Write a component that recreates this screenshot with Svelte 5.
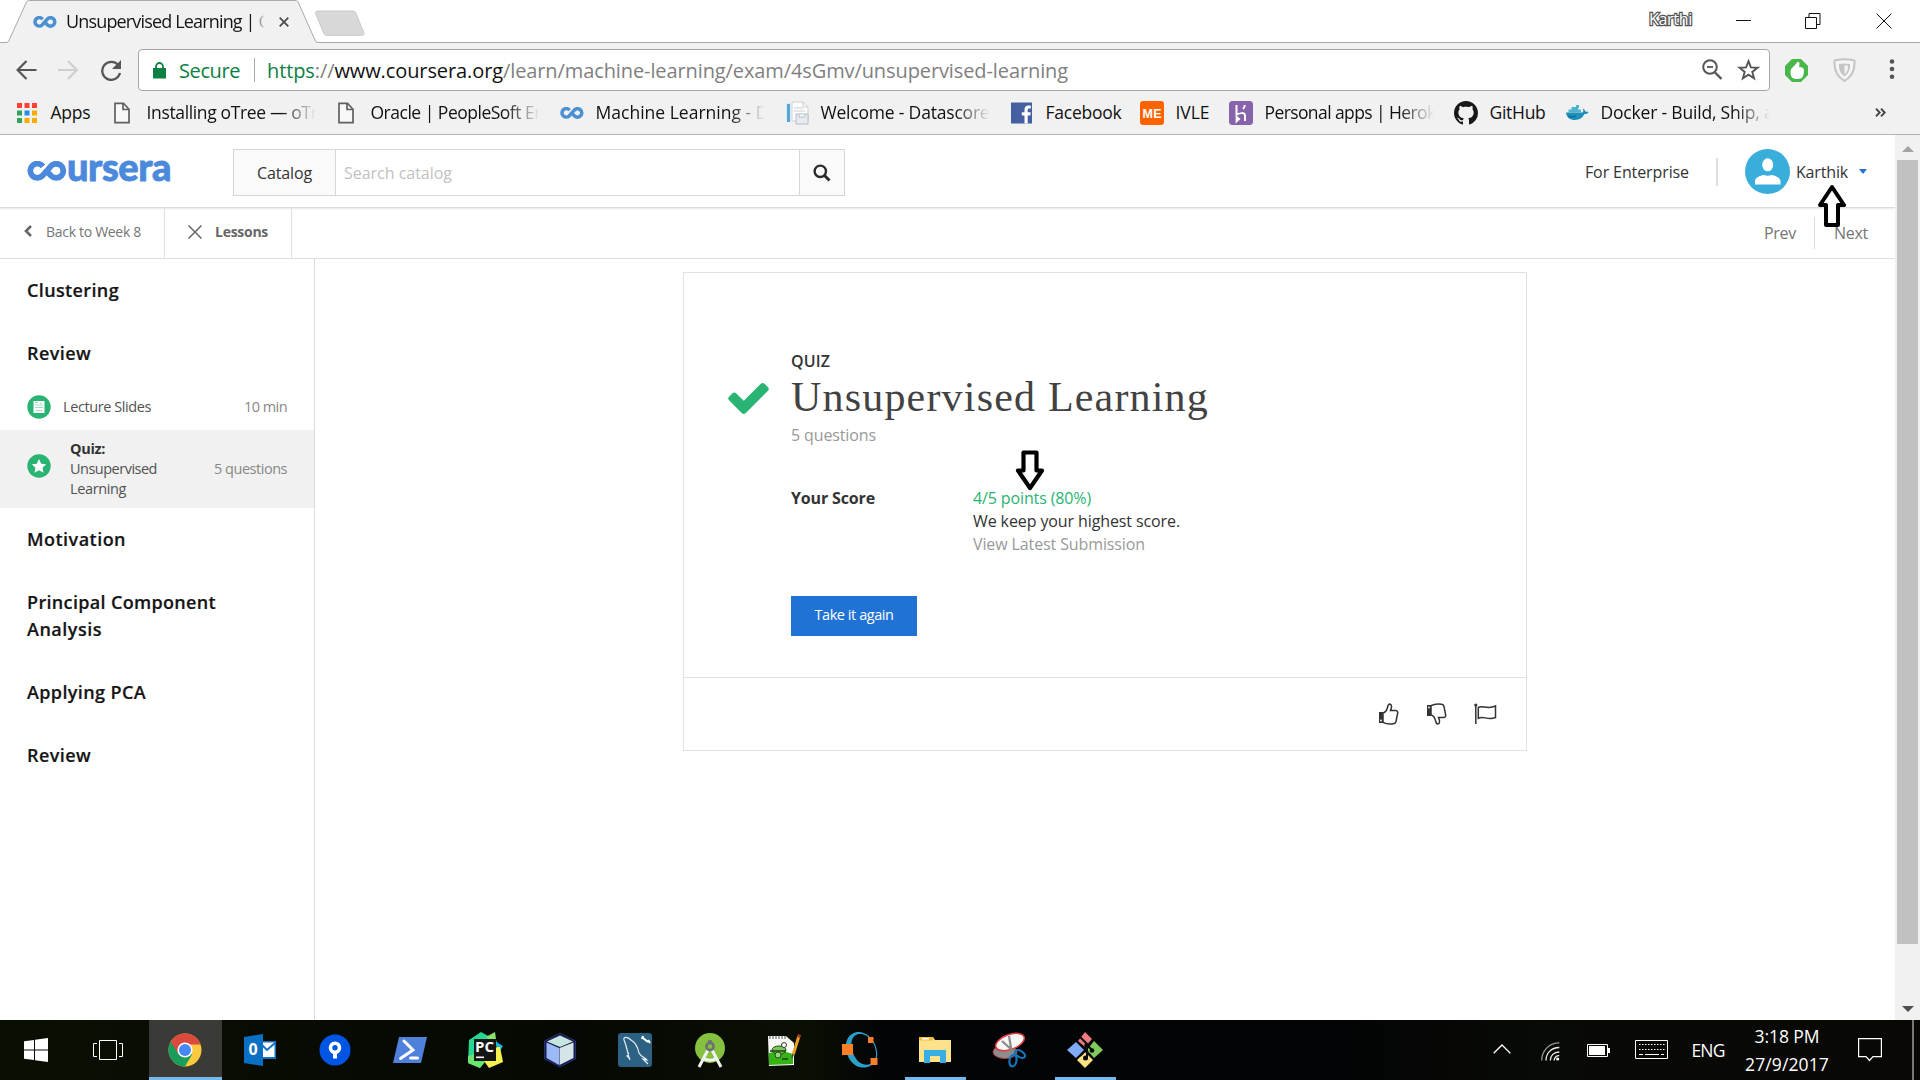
<script>
  // Tracks a label so that it takes exactly the given width.
  function fit(node, width) {
    const natural = node.getBoundingClientRect().width;
    const count = [...node.textContent].length;
    node.style.letterSpacing = `${(width - natural) / count}px`;
  }

  const bookmarks = [
    { icon: 'apps', label: 'Apps', text: 40, slot: 96 },
    { icon: 'file', label: 'Installing oTree — oTr', text: 171, slot: 224, fade: true },
    { icon: 'file', label: 'Oracle | PeopleSoft En', text: 174, slot: 225, fade: true },
    { icon: 'coursera', label: 'Machine Learning - D', text: 173, slot: 225, fade: true },
    { icon: 'welcome', label: 'Welcome - Datascore', text: 169, slot: 225, fade: true },
    { icon: 'facebook', label: 'Facebook', text: 76, slot: 130 },
    { icon: 'ivle', label: 'IVLE', text: 34, slot: 89 },
    { icon: 'heroku', label: 'Personal apps | Herok', text: 171, slot: 225, fade: true },
    { icon: 'github', label: 'GitHub', text: 56, slot: 111 },
    { icon: 'docker', label: 'Docker - Build, Ship, a', text: 173, slot: 225, fade: true }
  ];

  const tasks = [
    { icon: 'chrome', active: true },
    { icon: 'outlook' },
    { icon: 'sourcetree' },
    { icon: 'powershell' },
    { icon: 'pycharm' },
    { icon: 'netbeans' },
    { icon: 'mysql' },
    { icon: 'android' },
    { icon: 'notepad' },
    { icon: 'octave' },
    { icon: 'explorer', open: true },
    { icon: 'snip' },
    { icon: 'git', open: true }
  ];
</script>

{#snippet infinity(cls)}
  <svg class={cls} viewBox="0 0 40 20">
    <path d="M16 5.400A7.100 7.100 0 1 0 15.300 14.900L23.500 5.600A7.100 7.100 0 1 1 24.300 15L21.400 12" fill="none" stroke="currentColor" stroke-width="5.800" stroke-linejoin="round" />
  </svg>
{/snippet}

{#snippet bookmarkIcon(name)}
  {#if name === 'coursera'}
    {@render infinity('bm-infinity')}
  {:else}
    <svg class="bm-icon" viewBox="0 0 24 24">
      {#if name === 'apps'}
        <path fill="#ff3f34" d="M2 2h5v5H2zM9.500 2h5v5h-5zM17 2h5v5h-5z" />
        <path fill="#31a35c" d="M2 9.500h5v5H2zM2 17h5v5H2z" />
        <path fill="#2490ee" d="M9.500 9.500h5v5h-5z" />
        <path fill="#f9ab00" d="M17 9.500h5v5h-5zM9.500 17h5v5h-5zM17 17h5v5h-5z" />
      {:else if name === 'file'}
        <path d="M4 2.300h8.500l5.500 6V21.700H4z M12 2.500v6h6" fill="#f8f8f8" stroke="#5f6062" stroke-width="1.700" />
      {:else if name === 'welcome'}
        <path d="M1 2h5v19H1z" fill="#d8ebf6" />
        <path d="M2 3h3v18H2z" fill="#55a5d8" />
        <path d="M7 1h11l5 5v14H7z" fill="#fbfbfc" stroke="#ccd1d8" />
        <path d="M18 1v5h5M9 7h9M9 10h11" fill="none" stroke="#cbd1da" />
        <path d="M11 13h12v10H11zM14 13v3h6v-3" fill="#e7ebf0" stroke="#b6bec8" />
      {:else if name === 'facebook'}
        <rect x="1" y="1.500" width="21" height="21" fill="#4460a0" />
        <path d="M14.500 22.500v-8h-2.700v-3.200h2.700V8.600c0-2.700 1.500-4.200 4.100-4.200h2.200v3h-1.500c-1.200 0-1.600.6-1.600 1.600v2.300h3l-.4 3.200h-2.600v8z" fill="#fff" />
      {:else if name === 'ivle'}
        <rect width="24" height="24" rx="3" fill="#ff6300" />
        <text x="12" y="16.500" text-anchor="middle" font-family="Liberation Sans" font-weight="700" font-size="12.500" fill="#fff" textLength="19">ME</text>
      {:else if name === 'heroku'}
        <rect width="24" height="24" rx="3.500" fill="#8663aa" />
        <path d="M7.500 4v9.500c3-1.200 8.500-2.800 8.500 1V20M15.800 4c0 1.600-.8 3-1.800 4M7.600 16v4.200l2.400-2.100z" fill="none" stroke="#fff" stroke-width="2" />
      {:else if name === 'github'}
        <path transform="scale(1.500)" fill="#191717" d="M8 0C3.580 0 0 3.580 0 8c0 3.540 2.290 6.530 5.470 7.590.4.07.55-.17.55-.38 0-.19-.01-.82-.01-1.490-2.010.37-2.530-.49-2.690-.94-.09-.23-.48-.94-.82-1.130-.28-.15-.68-.52-.01-.53.63-.01 1.080.58 1.230.82.72 1.210 1.870.87 2.330.66.07-.52.28-.87.51-1.070-1.780-.2-3.640-.89-3.640-3.950 0-.87.31-1.590.82-2.150-.08-.2-.36-1.020.08-2.120 0 0 .67-.21 2.200.82.64-.18 1.320-.27 2-.27s1.360.09 2 .27c1.530-1.040 2.200-.82 2.200-.82.44 1.100.16 1.920.08 2.120.51.56.82 1.270.82 2.150 0 3.070-1.870 3.750-3.650 3.950.29.25.54.73.54 1.480 0 1.070-.01 1.930-.01 2.200 0 .21.15.46.55.38A8.010 8.010 0 0 0 16 8c0-4.420-3.580-8-8-8z" />
      {:else if name === 'docker'}
        <path d="M1 11.500h16.500c1-.6 1-2.500.3-4 1.600.6 2.200 1.700 2.300 3 1.200-.3 2.400 0 3.400.4-.7 1.700-2.200 2.300-4 2.200C17.700 17 14.500 19 10 19c-5 0-8.500-2.500-9-7.500z" fill="#1d8fb8" />
        <path d="M3.500 8.500h12.500v3H3.500zM6.500 6h6.500v3H6.500zM11 4h3v3h-3z" fill="#4fb3d0" />
        <path d="M3.500 15c3 1.500 6 1 7.500 0" stroke="#0e5d80" fill="none" />
      {/if}
    </svg>
  {/if}
{/snippet}

{#snippet taskIcon(name)}
  <svg class="task-icon" viewBox="0 0 36 36">
    {#if name === 'chrome'}
      <circle cx="18" cy="18" r="16.500" fill="#fbc93d" />
      <path d="M18 18 3.700 9.750A16.500 16.500 0 0 0 18 34.500l7.200-12.300z" fill="#1a9d5b" />
      <path d="M3.700 9.750A16.500 16.500 0 0 1 33.500 12.500H18l-6.800 9z" fill="#dc4a3d" />
      <circle cx="18" cy="18" r="7.600" fill="#fff" />
      <circle cx="18" cy="18" r="6" fill="#4587f3" />
    {:else if name === 'outlook'}
      <path d="M19 9h15v18H19z" fill="#0f72c6" />
      <path d="M20 10.500h12.500V25H20z" fill="#fff" />
      <path d="m19 12 6 6 8-7" fill="none" stroke="#0f72c6" stroke-width="2" />
      <path d="m2 5 19-3v32L2 31z" fill="#0a70c4" />
      <text x="11.200" y="23.200" text-anchor="middle" font-family="Open Sans" font-weight="700" font-size="16" fill="#fff">0</text>
    {:else if name === 'sourcetree'}
      <circle cx="18" cy="18" r="15.500" fill="#0055e4" />
      <circle cx="18" cy="15.800" r="4.500" fill="none" stroke="#fff" stroke-width="3.600" />
      <path d="M16 20h4v6.500h-4z" fill="#fff" />
    {:else if name === 'powershell'}
      <path d="M7 5h28l-6 26H1z" fill="#4f80db" />
      <path d="m12 9 9 9L8.500 26.500M18.500 26h7" fill="none" stroke="#fff" stroke-width="3" stroke-linecap="round" />
    {:else if name === 'pycharm'}
      <path d="m2 8 12-8 9 5-5 24-5 7-12-5z" fill="#25d790" />
      <path d="m19 5 9-5 2 14z" fill="#87e36b" />
      <path d="m28 9 8 5-5 8z" fill="#17b6e0" />
      <path d="M30 15h3l3 15-14 6-5-7z" fill="#f4f34e" />
      <path d="m1 24 6-2 3 7 8 1-5 6-12-5z" fill="#6be36d" />
      <path d="M7 7h22v22H7z" fill="#151515" />
      <text x="8" y="19.800" font-family="Open Sans" font-weight="700" font-size="14" fill="#fff" textLength="19" lengthAdjust="spacingAndGlyphs">PC</text>
      <path d="M9 24.500h8v1.600H9z" fill="#fff" />
    {:else if name === 'netbeans'}
      <path d="m18 1 15.500 8v18L18 35 2.500 27V9z" fill="#171c4d" stroke="#29306e" />
      <path d="m18 3.500 13 6L18 15 5 9.500z" fill="#c6e6df" />
      <path d="M4.500 10.500 17 16v17L4.500 26z" fill="#9bb9f4" />
      <path d="M31.500 10.500 17.500 16v17l14-7z" fill="#d5e4e7" />
    {:else if name === 'mysql'}
      <rect x="1" y="1" width="34" height="34" rx="3" fill="#2c6184" />
      <path d="M13 28c-3-7-2-11-6-20-1-4 4-3 7 0 5 3 7 8 8 13 2 4 6 4 8 7l-4-1 5 5M12 21l-2 3 3 3" fill="none" stroke="#e8f0f4" stroke-width="1.200" />
      <path d="m26 6 5 4M26 4l-1 3M31 8l2 3" stroke="#fff" stroke-width="2.200" />
    {:else if name === 'android'}
      <circle cx="18" cy="16" r="15" fill="#86c13f" />
      <path d="m17 16-10 19M19 16l10 19M11 26c4 3 10 3 14 0" fill="none" stroke="#f4f4f4" stroke-width="3" />
      <path d="M16 8h4v5h-4z" fill="#777" />
      <circle cx="18" cy="14.500" r="3.600" fill="#84c044" stroke="#6e7171" stroke-width="2.600" />
    {:else if name === 'notepad'}
      <path d="M1 4h18l8 7v22L2 34z" fill="#fbfcf6" />
      <path d="M2 21q12-4 24 1v10L2 33z" fill="#35b515" />
      <path d="M3 4v3M6 4v3M9 4v3M12 4v3M15 4v3M18 4v3" stroke="#555" />
      <ellipse cx="12" cy="18" rx="7" ry="4" fill="#7bc757" stroke="#1e4d15" />
      <circle cx="11" cy="23" r="3" fill="#9ad775" stroke="#244a1a" />
      <circle cx="17" cy="13" r="2.500" fill="#fff" stroke="#333" />
      <path d="M3 19h16M15 27h6" stroke="#243b19" stroke-width="1.400" />
      <path d="M32 4 26 23" stroke="#e9a326" stroke-width="3" />
      <path d="m32.500 2.500-.8 3" stroke="#b4302a" stroke-width="3" />
      <path d="m26 22-1 4" stroke="#444" stroke-width="1.500" />
    {:else if name === 'octave'}
      <path fill-rule="evenodd" d="M15 0C27-1 37 13 35 25c-2 9-13 14-22 8C2 26-1 3 15 0zm2 2C5 4 9 23 17 30c7 5 15 3 17-6C35 13 27 1 17 2z" fill="#2aa0cd" />
      <path d="M0 12h11v11H0zM26 5h5.500v6H26zM28.500 26h7v7h-7z" fill="#fb7f26" />
    {:else if name === 'explorer'}
      <path d="M2 5h14l2 3h16v22H2z" fill="#fde28c" />
      <path d="M2 5h14v3.500H2z" fill="#f6bd31" />
      <path d="M5 6h7v1.500H5z" fill="#fff" />
      <path d="M7 18h22v13h-6v-7H13v7H7z" fill="#39ade5" />
    {:else if name === 'snip'}
      <ellipse cx="13" cy="20" rx="12" ry="6.500" fill="#8d8d8d" stroke="#b33c3c" />
      <ellipse cx="18" cy="10" rx="15" ry="7.500" transform="rotate(-20 18 10)" fill="#f6f6f6" stroke="#e23a3d" stroke-width="1.500" />
      <path d="M10 9 21 19M17 4l3 18" stroke="#8a8a8a" stroke-width="2.200" />
      <ellipse cx="28" cy="22" rx="3" ry="5.500" transform="rotate(-60 28 22)" fill="none" stroke="#1674b8" stroke-width="2.200" />
      <ellipse cx="21" cy="28.500" rx="3.500" ry="6" transform="rotate(10 21 28.500)" fill="none" stroke="#1674b8" stroke-width="2.200" />
    {:else if name === 'git'}
      <path d="m18 0 7 7-7 8-7-6z" fill="#f07b80" />
      <path d="m27 9 9 9-9 8-7-8z" fill="#81cb5c" />
      <path d="m9 10 8 8-8 8-9-8z" fill="#80abf8" />
      <path d="m18 20 8 8-8 8-8-8z" fill="#fbe182" />
      <path d="m13 5 7 7v15M20 13l6 6M18 19l-5 5" fill="none" stroke="#090b0d" stroke-width="2" />
      <circle cx="18.500" cy="26" r="2.500" fill="#090b0d" /><circle cx="25" cy="18.500" r="2.300" fill="#090b0d" /><circle cx="19.500" cy="13.500" r="2.300" fill="#090b0d" />
    {/if}
  </svg>
{/snippet}

{#snippet thumb()}
  <path d="M1 9h4v11H1z" fill="#333" />
  <circle cx="3" cy="17.500" r=".9" fill="#fff" />
  <path d="M5 10c2.500-.6 4-3.200 4.600-6 .4-2 .8-3 2.300-3 2.200.3 1.900 3.500.6 6.500h5.300c2 .1 2.200 2 1.600 3.800L18 18.500c-.4 1.300-1 2-2.400 2.200-3.600.5-7.600.3-10.600-1.400z" fill="none" stroke="#333" stroke-width="1.500" />
{/snippet}

<div class="screen">
  <header class="titlebar">
    <div class="tab">
      <svg class="tab-shape" viewBox="0 0 320 43">
        <path d="M0 42.500H6c2 0 2.500-1 3.200-2.500L26 3c.8-1.800 1.500-2.500 3.500-2.500H295c2 0 2.800.7 3.500 2.500L315 40c.7 1.500 1.300 2.500 3 2.500h2V43H0z" fill="#f1f1f1" />
        <path d="M0 42.500H6c2 0 2.500-1 3.200-2.500L26 3c.8-1.800 1.500-2.500 3.500-2.500H295c2 0 2.800.7 3.500 2.500L315 40c.7 1.500 1.300 2.500 3 2.500h2" fill="none" stroke="#a9a9a9" />
      </svg>
      {@render infinity('tab-favicon')}
      <div class="tab-title"><span use:fit={203}>Unsupervised Learning | C</span></div>
      <svg class="tab-close" viewBox="0 0 10 10"><path d="m.7.7 8.600 8.600M9.300.7.7 9.300" stroke="#4d4d4d" stroke-width="1.800" /></svg>
    </div>
    <svg class="new-tab" viewBox="0 0 52 27"><path d="M3.500 1H39c1.500 0 2.200.6 2.800 2l8 19.500c.6 1.600.2 2.800-1.500 2.800H13c-1.700 0-2.600-.6-3.200-2L1.600 3.500C1 2 1.800 1 3.500 1z" fill="#d8d8d8" stroke="#c9c9c9" /></svg>
    <div class="profile"><span use:fit={43}>Karthi</span></div>
    <svg class="window-buttons" viewBox="0 0 156 16">
      <path d="M0 7.500h15M69.500 4.500h11v11h-11zM73 4V.5h11v11h-3.500M140.500.5l15 15M155.500.5l-15 15" fill="none" stroke="#111" />
    </svg>
  </header>

  <div class="toolbar">
    <svg class="nav-buttons" viewBox="0 0 106 22">
      <path d="M20.500 11H2M10.500 2 1.600 11l8.900 9" fill="none" stroke="#555" stroke-width="2.200" />
      <path d="M42 11h18.500M52 2l8.900 9-8.900 9" fill="none" stroke="#cfcfcf" stroke-width="2.200" />
      <path d="M102.500 6.500A9 9 0 1 0 104 14" fill="none" stroke="#555" stroke-width="2.300" />
      <path d="M105 1v9h-9z" fill="#555" />
    </svg>
    <div class="omnibox">
      <svg class="lock" viewBox="0 0 13 17"><path d="M0 6h13v10.500H0z" fill="#0b8043" /><path d="M3 7V4.500a3.500 3.500 0 0 1 7 0V7" fill="none" stroke="#0b8043" stroke-width="1.800" /></svg>
      <span class="secure" use:fit={61}>Secure</span>
      <i class="omni-sep"></i>
      <span class="url" use:fit={801}><b class="scheme">https</b>://<b class="host">www.coursera.org</b>/learn/machine-learning/exam/4sGmv/unsupervised-learning</span>
      <svg class="omni-icons" viewBox="0 0 58 22">
        <circle cx="8" cy="8" r="6.800" fill="none" stroke="#555" stroke-width="2" />
        <path d="M5 8h6" stroke="#555" stroke-width="1.800" /><path d="m13 13.500 6.500 6.500" stroke="#555" stroke-width="2.400" />
        <path d="m46.500 2.200 2.400 6.200 6.600.3-5.200 4.200 1.800 6.500-5.600-3.700-5.600 3.700 1.800-6.500-5.200-4.200 6.600-.3z" fill="none" stroke="#555" stroke-width="1.900" />
      </svg>
    </div>
    <svg class="extensions" viewBox="0 0 112 24">
      <path d="M7 1h9l7 7v9l-7 7H7l-7-7V8z" fill="#49b649" />
      <path d="M5.500 13c0-2 2.500-4 4-5.500 1.500-1.200 2.200-3.500 3.500-3.800 1.800 0 1.800 3 1 5.300 3 0 5 .8 4.800 3 .2 4-.6 7.500-3 8.500-2.500.6-5.500.6-7.800-.2-2-1-2.500-4-2.500-7.300z" fill="#fff" />
      <path d="M49.500 2.500q10-2.500 20 0c.7 9-2.500 16-10 20.500-7.500-4.500-10.700-11.500-10-20.500z" fill="#f4f4f4" stroke="#c4c4c4" stroke-width="2" />
      <path d="M54 6q5.500-1 11 0c.3 6-1.700 9.500-5.500 12.500C55.700 15.500 53.700 12 54 6z" fill="#c4c4c4" /><path d="M59.500 7.500H63c.3 4-1 7-3.500 9z" fill="#f4f4f4" />
      <circle cx="107" cy="3.500" r="2.300" fill="#555" /><circle cx="107" cy="11" r="2.300" fill="#555" /><circle cx="107" cy="18.800" r="2.300" fill="#555" />
    </svg>
  </div>

  <nav class="bookmarks">
    {#each bookmarks as item}
      <div class="bookmark" style:width="{item.slot}px">
        {@render bookmarkIcon(item.icon)}
        <div class="bm-label" class:fade={item.fade}><span use:fit={item.text}>{item.label}</span></div>
      </div>
    {/each}
    <svg class="more" viewBox="0 0 11 9"><path d="m1 .7 3.700 3.800L1 8.300M6 .7l3.700 3.800L6 8.300" fill="none" stroke="#444" stroke-width="1.900" /></svg>
  </nav>

  <div class="viewport">
    <div class="page">
      <header class="site-header">
        <div class="logo">{@render infinity('logo-infinity')}<span class="logo-text"><span use:fit={104}>ursera</span></span></div>
        <div class="search">
          <div class="catalog"><span use:fit={55}>Catalog</span></div>
          <div class="query"><span use:fit={108}>Search catalog</span></div>
          <div class="go"><svg class="search-icon" viewBox="0 0 18 18"><circle cx="7.300" cy="7.300" r="5.700" fill="none" stroke="#2b2b2b" stroke-width="2.400" /><path d="m11.500 11.500 5 5" stroke="#2b2b2b" stroke-width="3" /></svg></div>
        </div>
        <span class="enterprise"><span use:fit={104}>For Enterprise</span></span>
        <i class="head-sep"></i>
        <svg class="avatar" viewBox="0 0 45 45"><circle cx="22.500" cy="22.500" r="22.500" fill="#3aaedb" /><ellipse cx="22.700" cy="15.800" rx="5.500" ry="6.500" fill="#fff" /><path d="M10 35.500v-3c0-4 5-6 9-6.500 2 1 5.400 1 7.500 0 4 .5 9 2.500 9 6.500v3z" fill="#fff" /></svg>
        <span class="username"><span use:fit={52}>Karthik</span></span>
        <i class="caret"></i>
      </header>

      <nav class="subnav">
        <div class="back">
          <svg class="chev" viewBox="0 0 8 12"><path d="M7 1 2 6l5 5" fill="none" stroke="#666" stroke-width="2.600" /></svg>
          <span use:fit={95}>Back to Week 8</span>
        </div>
        <div class="lessons">
          <svg class="cross" viewBox="0 0 14 14"><path d="m.5.5 13 13m0-13-13 13" stroke="#666" stroke-width="1.500" /></svg>
          <b use:fit={53}>Lessons</b>
        </div>
        <div class="pager"><span class="prev"><span use:fit={32}>Prev</span></span><span class="next"><span use:fit={34}>Next</span></span></div>
      </nav>

      <div class="body">
        <aside class="sidebar">
          <h3><span use:fit={92}>Clustering</span></h3>
          <h3><span use:fit={64}>Review</span></h3>
          <div class="item slides">
            <svg class="badge" viewBox="0 0 24 24"><circle cx="12" cy="12" r="11.700" fill="#29b473" /><path d="M6.500 6h11v12h-11z" fill="#fff" /><path d="M8 10h8M8 12.500h8M9 15.500h6M8 7.500h3M14 7v2" stroke="#9fdcbf" /></svg>
            <span class="name"><span use:fit={88}>Lecture Slides</span></span>
            <span class="meta"><span use:fit={43}>10 min</span></span>
          </div>
          <div class="item current">
            <svg class="badge" viewBox="0 0 24 24"><circle cx="12" cy="12" r="11.700" fill="#29b473" /><path d="m12 5 2.200 4.700 5 .6-3.700 3.500 1 5-4.500-2.500-4.500 2.500 1-5-3.700-3.500 5-.6z" fill="#fff" /></svg>
            <span class="name quiz"><b use:fit={35}>Quiz:</b><span use:fit={87}>Unsupervised</span><span use:fit={56}>Learning</span></span>
            <span class="meta"><span use:fit={73}>5 questions</span></span>
          </div>
          <h3><span use:fit={99}>Motivation</span></h3>
          <h3><span use:fit={189}>Principal Component</span><br /><span use:fit={75}>Analysis</span></h3>
          <h3><span use:fit={119}>Applying PCA</span></h3>
          <h3><span use:fit={64}>Review</span></h3>
        </aside>

        <main class="content">
          <section class="card">
            <div class="card-main">
              <svg class="check" viewBox="121 334 1550 1188"><path fill="#29b473" d="M1671 566q0 40-28 68l-724 724-136 136q-28 28-68 28t-68-28l-136-136-362-362q-28-28-28-68t28-68l136-136q28-28 68-28t68 28l294 295 656-657q28-28 68-28t68 28l136 136q28 28 28 68z" /></svg>
              <div class="details">
                <div class="kicker"><span use:fit={39}>QUIZ</span></div>
                <h1><span use:fit={418}>Unsupervised Learning</span></h1>
                <div class="count"><span use:fit={85}>5 questions</span></div>
                <div class="score">
                  <div class="score-label"><b use:fit={84}>Your Score</b></div>
                  <div class="score-info">
                    <span class="points" use:fit={118}>4/5 points (80%)</span>
                    <span use:fit={207}>We keep your highest score.</span>
                    <span class="muted" use:fit={172}>View Latest Submission</span>
                  </div>
                </div>
                <button><span use:fit={79}>Take it again</span></button>
              </div>
            </div>
            <footer class="card-foot">
              <svg class="react" viewBox="0 0 21 22">{@render thumb()}</svg>
              <svg class="react down" viewBox="0 0 21 22">{@render thumb()}</svg>
              <svg class="flag" viewBox="0 0 23 22"><circle cx="1.800" cy="2" r="1.600" fill="#333" /><path d="M1.800 2v19M4.300 4.500C9 1.500 12.500 7 21.500 3v11.500C13 18 10 12 4.300 15.300z" fill="none" stroke="#333" stroke-width="1.500" /></svg>
            </footer>
          </section>
        </main>
      </div>
    </div>

    <div class="scrollbar">
      <i class="sb-up"></i>
      <i class="sb-thumb"></i>
      <i class="sb-down"></i>
    </div>
  </div>

  <footer class="taskbar">
    <svg class="start" viewBox="0 0 24 24"><path d="m0 3.300 10-1.400v9.600H0zM11 1.800 24 0v11.500H11zM0 12.500h10v9.600L0 20.700zM11 12.500h13V24l-13-1.800z" fill="#fff" /></svg>
    <svg class="task-view" viewBox="0 0 30 20"><path d="M6.500.5h17v19h-17zM4 3.500H.5v13H4M26 3.500h3.500v13H26" fill="none" stroke="#fff" /></svg>
    <div class="tasks">
      {#each tasks as task}
        <div class="task" class:active={task.active} class:open={task.open}>{@render taskIcon(task.icon)}</div>
      {/each}
    </div>
    <div class="tray">
      <svg class="t-chev" viewBox="0 0 18 10"><path d="m.7 9.300 8.300-8.300 8.300 8.300" fill="none" stroke="#fff" stroke-width="1.300" /></svg>
      <svg class="t-wifi" viewBox="0 0 19 19"><path d="M.7 18.500C.7 9 8 .8 18.300.8" fill="none" stroke="#999" stroke-width="1.300" /><path d="M5 18.500C5 11.500 10 5.500 18.300 5.500M9.300 18.500c0-5 3.500-8.500 9-8.500M13.200 18.500c0-3 2-4.800 5.100-4.800" fill="none" stroke="#eee" stroke-width="1.300" /><circle cx="16.700" cy="17" r="1.600" fill="#fff" /></svg>
      <svg class="t-battery" viewBox="0 0 23 13"><path d="M.5.5h20v12H.5z" fill="none" stroke="#fff" /><path d="M2 2h16v9H2zM21 4h2v5h-2z" fill="#fff" /></svg>
      <svg class="t-keyboard" viewBox="0 0 33 19"><path d="M.5.500h32v18H.5z" fill="none" stroke="#fff" /><path d="M4 4.500h26M4 9.500h26" stroke="#fff" stroke-dasharray="1.500 1.500" /><path d="M4 14.500h4M10 14.500h14M26 14.500h3" stroke="#fff" /></svg>
      <span class="lang"><span use:fit={33}>ENG</span></span>
      <div class="clock"><span use:fit={65}>3:18 PM</span><span use:fit={84}>27/9/2017</span></div>
      <svg class="t-note" viewBox="0 0 24 24"><path d="M.6.6h22.800v18H15L11.500 22.500 8 18.600H.6z" fill="none" stroke="#fff" stroke-width="1.200" /></svg>
      <i class="peek"></i>
    </div>
  </footer>

  <svg class="pointer pointer-user" viewBox="0 0 28 45"><path d="M14 3 26 21h-6v20H8V21H2z" fill="#fff" stroke="#000" stroke-width="4" stroke-linejoin="round" /></svg>
  <svg class="pointer pointer-score" viewBox="0 0 30 42"><path d="M15 38 3 20.500h5.500V2.500h13v18H27z" fill="#fff" stroke="#000" stroke-width="4.200" stroke-linejoin="round" /></svg>
</div>

<style>
  :global(body) { margin: 0; overflow: hidden; background: #fff; }
  .screen { position: relative; width: 1920px; height: 1080px; display: flex; flex-direction: column; overflow: hidden; font-family: "Open Sans", "Noto Sans", sans-serif; color: #333; background: #fff; white-space: nowrap; }
  .screen *, .screen { box-sizing: border-box; }
  svg { display: block; flex: none; }
  i { display: block; flex: none; }

  .titlebar { height: 43px; flex: none; display: flex; box-shadow: inset 0 -1px #a9a9a9; }
  .tab { position: relative; width: 314px; height: 43px; display: flex; align-items: center; padding-left: 33px; }
  .tab-shape { position: absolute; left: 0; top: 0; width: 320px; height: 43px; }
  :global(.tab-favicon) { position: relative; width: 24px; height: 12px; color: #4a90d2; }
  .tab-title { position: relative; margin: -1px 0 0 9px; width: 199px; overflow: hidden; font-size: 18px; color: #151515; mask-image: linear-gradient(90deg, #000 187px, transparent 199px); }
  .tab-close { position: relative; width: 10px; height: 10px; margin-left: 14px; }
  .new-tab { width: 52px; height: 27px; margin-top: 10px; }
  .profile { margin: 9px 0 0 auto; padding-right: 44px; font-size: 16px; line-height: 20px; color: #fff; -webkit-text-stroke: 2.500px #555; paint-order: stroke fill; }
  .window-buttons { width: 156px; height: 16px; margin: 13px 28px 0 0; }

  .toolbar { height: 48px; flex: none; display: flex; padding-top: 6px; background: #f1f1f1; }
  .nav-buttons { width: 106px; height: 22px; margin: 10px 16px 0 16px; }
  .omnibox { width: 1632px; height: 42px; background: #fff; border: 1px solid #a5a5a5; border-radius: 4px; display: flex; align-items: center; padding-left: 14px; font-size: 20px; }
  .lock { width: 13px; height: 17px; margin-right: 13px; }
  .secure { color: #0b8043; }
  .omni-sep { width: 1px; height: 24px; margin: 0 12px 0 14px; background: #aaa; }
  .url { color: #808080; }
  .url b { font-weight: 400; }
  .url .scheme { color: #0b8043; }
  .url .host { color: #111; }
  .omni-icons { width: 58px; height: 22px; margin: 0 9px 0 auto; }
  .extensions { width: 112px; height: 24px; margin: 9px 0 0 15px; }

  .bookmarks { height: 44px; flex: none; display: flex; align-items: center; padding-left: 15px; background: #f1f1f1; border-bottom: 1px solid #b0b0b0; font-size: 17.500px; color: #111; }
  .bookmark { flex: none; display: flex; align-items: center; gap: 11px; }
  .bm-icon { width: 24px; height: 24px; }
  :global(.bm-infinity) { width: 24px; height: 12px; color: #4a90d2; }
  .bm-label { overflow: hidden; line-height: 28px; margin-top: -2px; padding-left: .5px; }
  .fade { width: 170px; mask-image: linear-gradient(90deg, #000 135px, transparent 170px); }
  .more { width: 11px; height: 9px; margin-left: 85px; }

  .viewport { height: 885px; flex: none; display: flex; }
  .page { width: 1895px; display: flex; flex-direction: column; }
  .site-header { height: 73px; flex: none; display: flex; align-items: flex-start; padding: 14px 0 0 27px; border-bottom: 1px solid #dcdcdc; box-shadow: 0 1px 2px #e8e8e8; font-size: 16px; line-height: 46px; }
  .logo { display: flex; width: 206px; height: 46px; color: #4a89dc; align-items: flex-start; }
  :global(.logo-infinity) { width: 40px; height: 20px; margin-top: 12px; }
  .logo-text { font: 900 38px/40px Lato, sans-serif; margin-top: -3px; -webkit-text-stroke: .8px #4a89dc; }
  .search { width: 612px; height: 47px; display: flex; border: 1px solid #d6d6d6; }
  .catalog { width: 102px; padding-left: 23px; background: #fafafa; border-right: 1px solid #d6d6d6; }
  .query { flex: 1; padding-left: 8px; color: #c1c1c1; }
  .go { width: 45px; border-left: 1px solid #d6d6d6; background: #fafafa; padding: 14px 13px; }
  .search-icon { width: 18px; height: 18px; }
  .enterprise { margin-left: auto; }
  .head-sep { width: 2px; height: 28px; margin: 9px 27px 0 27px; background: #ddd; }
  .avatar { width: 45px; height: 45px; margin-right: 6px; }
  .caret { margin: 20px 28px 0 11px; border: 4px solid transparent; border-top: 5px solid #2073d5; border-bottom: 0; }

  .subnav { height: 51px; flex: none; display: flex; border-bottom: 1px solid #dfdfdf; color: #757575; font-size: 14px; line-height: 48px; }
  .back { width: 165px; display: flex; border-right: 1px solid #dfdfdf; padding-left: 24px; }
  .chev { width: 8px; height: 12px; margin: 17px 14px 0 0; }
  .lessons { width: 127px; display: flex; border-right: 1px solid #dfdfdf; padding-left: 23px; }
  .lessons b { color: #666; }
  .cross { width: 14px; height: 14px; margin: 17px 13px 0 0; }
  .pager { margin-left: auto; display: flex; padding-top: 9px; font-size: 16px; line-height: 33px; }
  .prev { height: 32px; padding-right: 18px; border-right: 1px solid #ddd; }
  .next { padding: 0 27px 0 19px; }

  .body { flex: 1; display: flex; }
  .sidebar { width: 315px; border-right: 1px solid #dcdcdc; }
  h3 { margin: 0; padding: 18px 27px; font-size: 18px; line-height: 27px; font-weight: 600; color: #151515; -webkit-text-stroke: .2px #151515; }
  .item { height: 45px; display: flex; align-items: center; padding: 0 27px; font-size: 14.500px; line-height: 20px; color: #525252; }
  .slides { padding-bottom: 1px; }
  .badge { width: 24px; height: 24px; margin-right: 12px; }
  .meta { margin-left: auto; color: #888; }
  .current { height: 78px; background: #f1f1f1; }
  .current .badge { margin-top: -6px; margin-right: 19px; }
  .quiz { display: flex; flex-direction: column; align-items: flex-start; }
  .quiz b { color: #333; }

  .content { flex: 1; display: flex; justify-content: center; padding-top: 13px; }
  .card { width: 844px; height: 479px; border: 1px solid #e1e1e1; font-size: 16px; line-height: 23px; }
  .card-main { height: 405px; display: flex; padding: 77px 0 0 44px; border-bottom: 1px solid #e1e1e1; }
  .check { width: 41px; height: 31px; margin: 33px 22px 0 0; }
  .kicker { font-weight: 600; color: #333; }
  h1 { margin: 0; font: 400 42px/48px "Liberation Serif", serif; color: #424242; }
  .count { margin-top: 3px; color: #999; }
  .score { display: flex; margin-top: 40px; }
  .score-label { width: 182px; }
  .score-label b { font-weight: 700; }
  .score-info { display: flex; flex-direction: column; align-items: flex-start; }
  .points { color: #29b473; }
  .muted { color: #999; }
  button { width: 126px; height: 40px; margin-top: 40px; padding: 0 0 2px; border: 0; background: #2073d5; color: #fff; font: 400 14.500px/20px "Open Sans", sans-serif; }
  .card-foot { height: 72px; display: flex; justify-content: flex-end; align-items: center; padding: 0 29px 1px 0; gap: 27px; }
  .react { width: 21px; height: 22px; }
  .down { transform: scaleY(-1); }
  .flag { width: 23px; height: 22px; }

  .scrollbar { width: 25px; background: #f1f1f1; display: flex; flex-direction: column; align-items: center; }
  .sb-up { margin: 11px 0 9px; border: 6px solid transparent; border-bottom: 6px solid #a3a3a3; border-top: 0; }
  .sb-thumb { width: 21px; height: 784px; background: #c1c1c1; margin-top: -1px; }
  .sb-down { margin-top: 62px; border: 6px solid transparent; border-top: 6px solid #505050; border-bottom: 0; }

  .taskbar { height: 60px; flex: none; display: flex; background: linear-gradient(90deg, #0a0f03 0, #060803 30%, #0a0f04 42%, #030405 46%, #030405 70%, #080a05 80%, #090805 100%); color: #fff; }
  .start { width: 24px; height: 24px; margin: 18px 0 0 24px; }
  .task-view { width: 30px; height: 20px; margin: 20px 26px 0 45px; }
  .tasks { display: flex; gap: 2px; }
  .task { width: 73px; height: 60px; display: flex; justify-content: center; padding: 12px 1px 0 0; }
  .task-icon { width: 36px; height: 36px; }
  .active { background: #3a3b36; border-bottom: 3px solid #76b9ed; }
  .open { width: 61px; margin: 0 6px; border-bottom: 3px solid #76b9ed; }
  .tray { margin-left: auto; width: 442px; display: grid; grid-template-columns: 48px 49px 46px 60px 54px 104px 62px 19px; justify-items: center; align-items: start; font-size: 17.500px; line-height: 28px; }
  .t-chev { width: 18px; height: 10px; margin-top: 24px; }
  .t-wifi { width: 19px; height: 19px; margin-top: 22px; }
  .t-battery { width: 23px; height: 13px; margin-top: 24px; }
  .t-keyboard { width: 33px; height: 19px; margin-top: 20px; }
  .lang { margin-top: 16px; }
  .clock { display: flex; flex-direction: column; align-items: center; padding-top: 2px; }
  .t-note { width: 24px; height: 24px; margin-top: 18px; }
  .peek { width: 2px; height: 60px; background: #777; margin-left: 5px; }

  .pointer { position: absolute; }
  .pointer-user { width: 28px; height: 45px; left: 1818px; top: 184px; }
  .pointer-score { width: 30px; height: 42px; left: 1015px; top: 450px; }
</style>
